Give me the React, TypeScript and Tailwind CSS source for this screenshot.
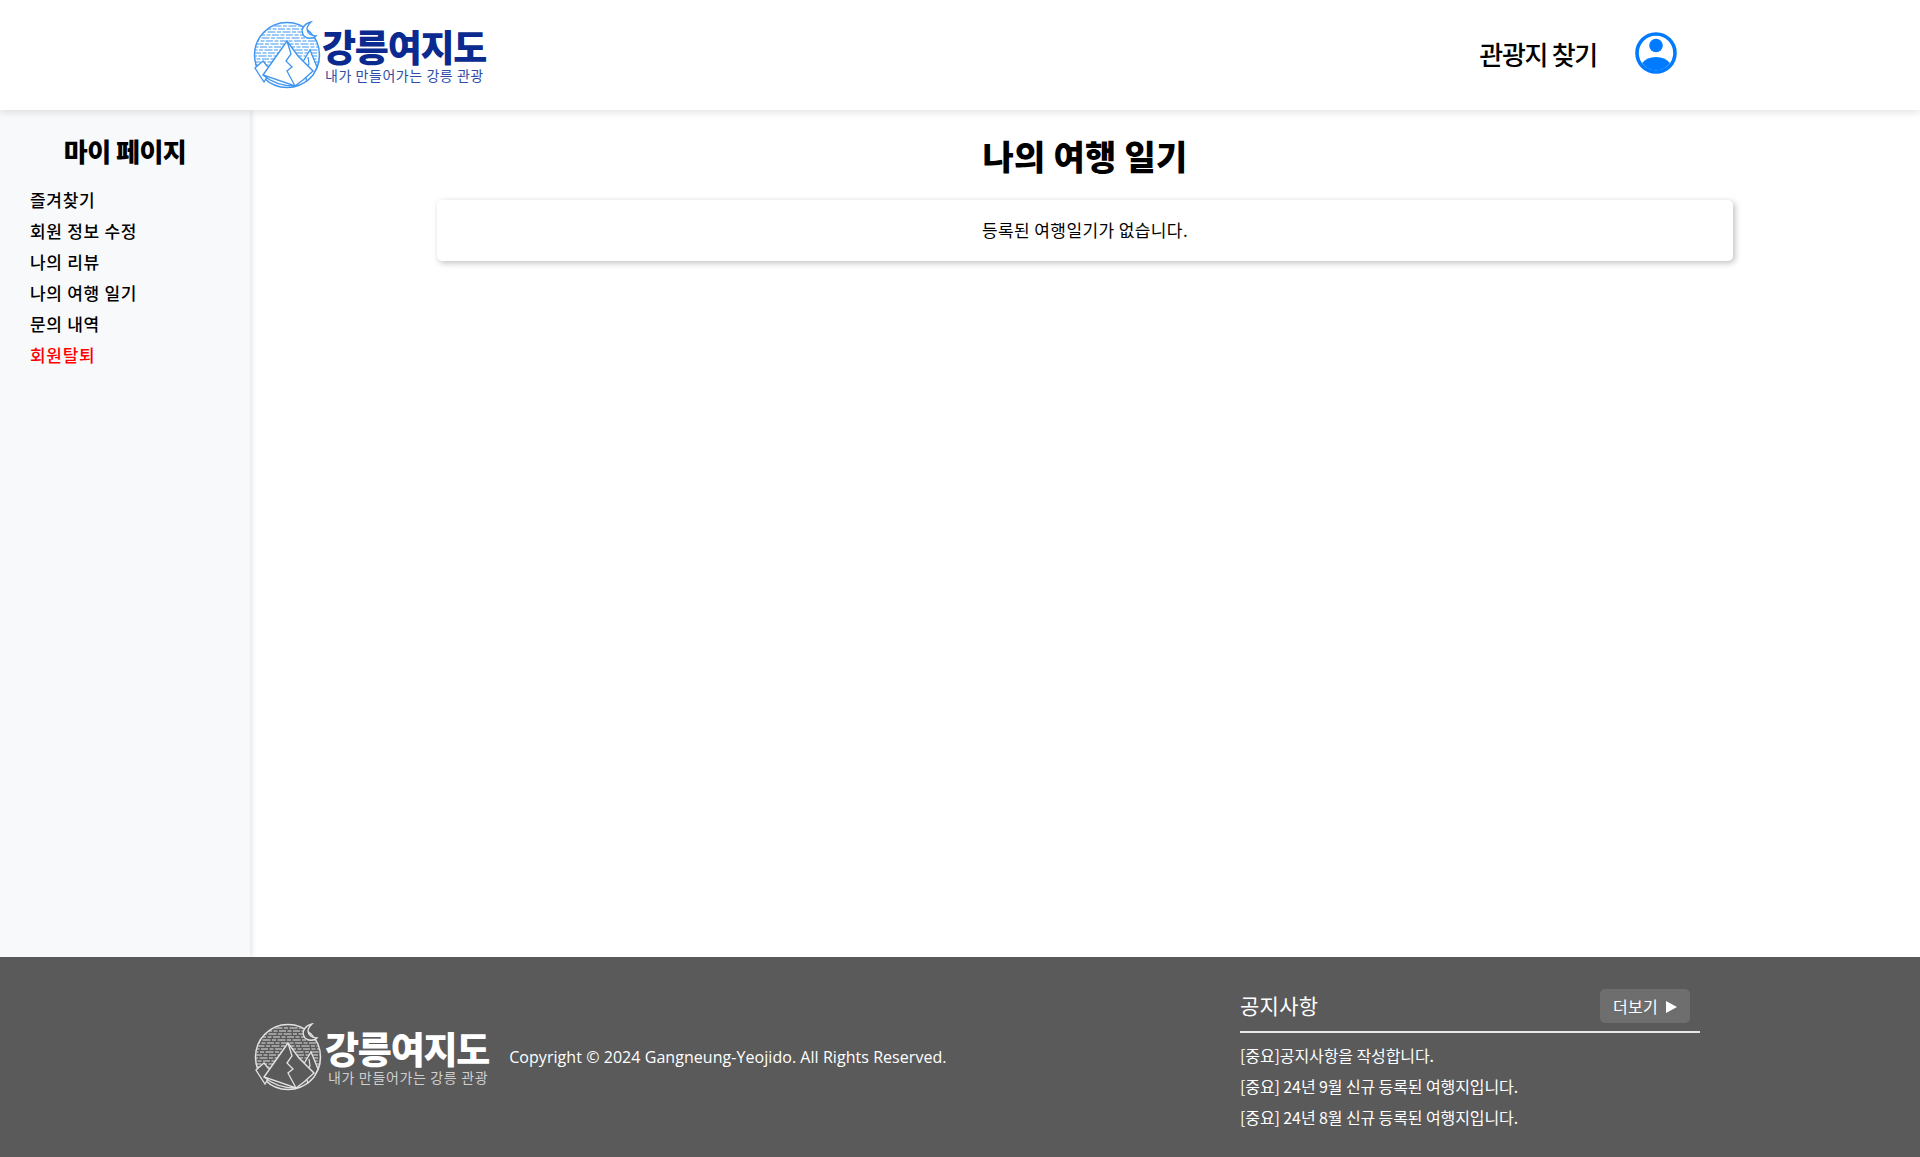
const KR = "font-['Noto_Sans_CJK_KR','Noto_Sans',sans-serif]";

const MENU = ['즐겨찾기', '회원 정보 수정', '나의 리뷰', '나의 여행 일기', '문의 내역'];
const NOTICES = ['[중요]공지사항을 작성합니다.', '[중요] 24년 9월 신규 등록된 여행지입니다.', '[중요] 24년 8월 신규 등록된 여행지입니다.'];

// brick rows of the logo mark, dense above and thinning towards the mountains
const ROWS = Array.from({ length: 15 }, (_, i) => 5 + i * 3);

function LogoMark({ color, fill, id }: { color: string; fill: string; id: string }) {
  return (
    <svg viewBox="0 0 68 68" className="w-[68px] h-[68px] shrink-0" fill="none" stroke={color}>
      <clipPath id={id}>
        <circle cx="34" cy="34" r="32" />
      </clipPath>
      <g clipPath={`url(#${id})`} strokeWidth="1.1">
        {ROWS.map((y, i) => (
          <line key={y} x1={0} y1={y} x2={68} y2={y} strokeDasharray={i % 2 ? '7 1.5 4 1.5' : '4 1.5 8 1.5'} strokeDashoffset={i * 3} />
        ))}
      </g>
      <circle cx="34" cy="34" r="32.5" strokeWidth="1.5" />
      <path d="M58 1C50 3 47 10 51 15c3 3 9 3 12 0-5 0-9-3-9-7 0-3 2-5 4-7z" fill={fill} strokeWidth="1.3" />
      <path d="M2 47l8-7 4 5 5 2-8 14z" fill={fill} strokeWidth="1.3" />
      <path d="M48 44l9-15 7 17-4 8-6 6z" fill={fill} strokeWidth="1.3" />
      <path d="M55 36l1 7-2 3 3 5" strokeWidth="1.2" />
      <path d="M10 54 34 20l11 15 15 15-10 9-8 6z" fill={fill} strokeWidth="1.4" />
      <path d="M34 20l4 13-5 7 6 6-5 4 8 15" strokeWidth="1.3" />
      <path d="M10 54c8 7 20 11 32 11" strokeWidth="1.3" />
    </svg>
  );
}

function Logo({ dark }: { dark?: boolean }) {
  return (
    <div className="flex items-center">
      <LogoMark id={dark ? 'bricks-dark' : 'bricks'} color={dark ? '#e2e2e2' : '#3f95f0'} fill={dark ? '#5a5a5a' : '#ffffff'} />
      <div className={`flex flex-col ${dark ? 'ml-[3px]' : 'ml-[1px]'}`}>
        <span className={`text-[37px] leading-[38px] font-black tracking-[-1.2px] ${dark ? 'text-white' : 'text-[#0b2a8f]'}`}>
          강릉여지도
        </span>
        <span className={`mt-[1px] pl-[3px] text-[14px] leading-[18px] ${dark ? 'tracking-[0.65px] text-[#cfcfcf]' : 'tracking-[0.55px] text-[#2f4da6]'}`}>
          내가 만들어가는 강릉 관광
        </span>
      </div>
    </div>
  );
}

export default function App() {
  return (
    <div className={`h-screen flex flex-col bg-white text-black ${KR}`}>
      <header className="relative z-10 h-[110px] shrink-0 flex items-center justify-between pl-[253px] pr-[243px] bg-white shadow-[0_2px_8px_rgba(0,0,0,0.12)]">
        <Logo />
        <div className="flex items-center gap-[38px] mb-[4px]">
          <span className="text-[26px] font-medium tracking-[-1.3px]">관광지 찾기</span>
          <svg viewBox="0 0 42 42" className="w-[42px] h-[42px]" fill="#007bff">
            <circle cx="21" cy="21" r="19" fill="none" stroke="#007bff" strokeWidth="3.6" />
            <circle cx="21" cy="13.5" r="6.8" />
            <path d="M7 31q5-6 14-6t14 6a17 17 0 0 1-28 0z" />
          </svg>
        </div>
      </header>

      <div className="flex flex-1 min-h-0">
        <aside className="w-[250px] shrink-0 bg-[#f8f9fa] shadow-[2px_0_5px_rgba(0,0,0,0.1)]">
          <h2 className="mt-[23px] text-center text-[26px] leading-[36px] font-black tracking-[-0.5px]">마이 페이지</h2>
          <ul className="mt-[15px] pl-[30px] text-[17px] font-medium">
            {MENU.map(m => (
              <li key={m} className="h-[31px] leading-[31px] tracking-[0.7px]">{m}</li>
            ))}
            <li className="h-[31px] leading-[31px] tracking-[0.7px] text-[#ff0000]">회원탈퇴</li>
          </ul>
        </aside>

        <main className="flex-1 flex flex-col items-center">
          <h1 className="mt-[21px] text-[34px] leading-[50px] font-black tracking-[0.2px]">나의 여행 일기</h1>
          <div className="mt-[19px] w-[1296px] h-[61px] flex items-center justify-center rounded-[5px] bg-white shadow-[2px_2px_6px_rgba(0,0,0,0.25)] text-[17px] tracking-[0.4px] pb-[1px]">
            등록된 여행일기가 없습니다.
          </div>
        </main>
      </div>

      <footer className="h-[200px] shrink-0 bg-[#5a5a5a] text-white flex pl-[254px] pr-[220px] justify-between">
        <div className="flex items-center">
          <Logo dark />
          <span className="ml-[20px] text-[16px] tracking-[0.05px] font-['Open_Sans',sans-serif]">
            Copyright © 2024 Gangneung-Yeojido. All Rights Reserved.
          </span>
        </div>
        <div className="w-[460px] pt-[32px]">
          <div className="flex items-center justify-between h-[34px] pb-[8px] border-b-2 border-[#e8e8e8] box-content">
            <span className="text-[21px] tracking-[0.3px]">공지사항</span>
            <span className="mr-[10px] w-[90px] h-[34px] flex items-center justify-center gap-[8px] rounded-[5px] bg-[#6e6e6e] text-[16px] tracking-[0.3px]">
              더보기
              <svg viewBox="0 0 11 12" className="w-[11px] h-[12px] mt-[1px]" fill="#fff"><polygon points="0,0 11,6 0,12" /></svg>
            </span>
          </div>
          <ul className="mt-[7px] text-[16px] tracking-[-0.1px]">
            {NOTICES.map(n => (
              <li key={n} className="h-[31px] leading-[31px]">{n}</li>
            ))}
          </ul>
        </div>
      </footer>
    </div>
  );
}
